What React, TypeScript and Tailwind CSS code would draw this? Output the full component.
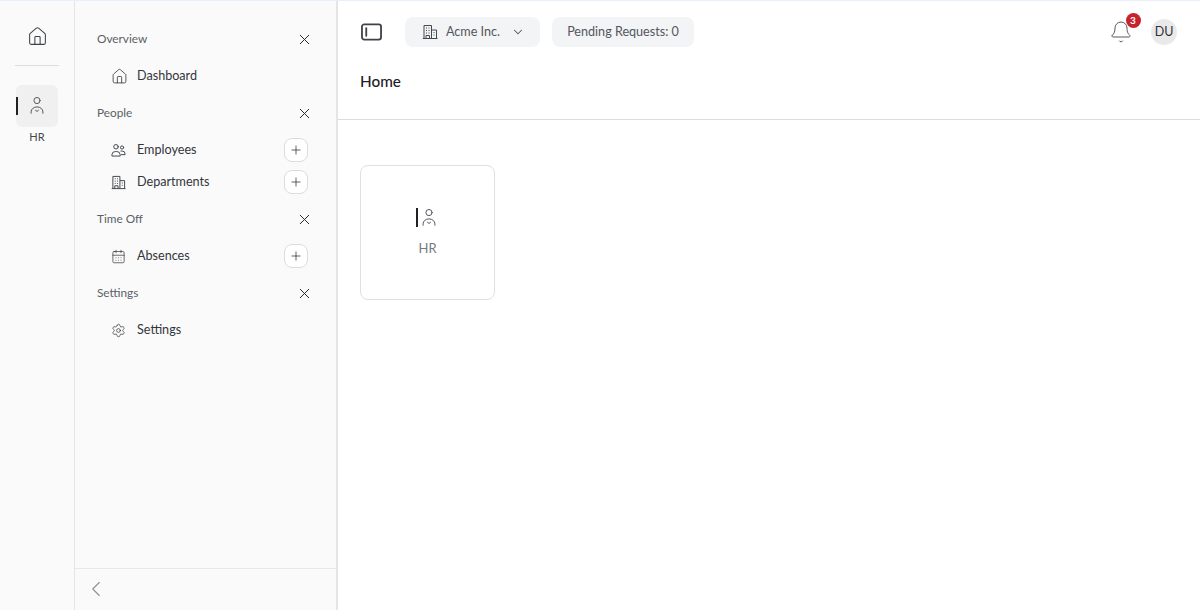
import * as React from "react"
import { Bell, CalendarDays, ChevronDown, ChevronLeft, House, Plus, Settings, X } from "lucide-react"

function PersonIcon({ className }: { className?: string }) {
  return (
    <svg viewBox="0 0 20 22" fill="none" stroke="currentColor" strokeWidth="1.1" strokeLinecap="round" className={className}>
      <circle cx="10" cy="5" r="3.4" />
      <path d="M3.5 19v-1.5a6.5 5.5 0 0 1 13 0V19" />
      <path d="M8.3 15.6 10 17l1.7-1.4" />
    </svg>
  )
}

function PeopleIcon({ className }: { className?: string }) {
  return (
    <svg viewBox="0 0 16 16" fill="none" stroke="currentColor" strokeWidth="1" strokeLinecap="round" strokeLinejoin="round" className={className}>
      <circle cx="5.3" cy="4" r="2.4" />
      <circle cx="11.8" cy="4.8" r="1.7" />
      <path d="M1 13.5v-1a3.6 3.6 0 0 1 3.6-3.4h1.6a3.6 3.6 0 0 1 3.6 3.4v1Z" />
      <path d="M10.6 8.6h1.4a3 3 0 0 1 3 3v.8h-3.8" />
    </svg>
  )
}

function BuildingIcon({ className }: { className?: string }) {
  return (
    <svg viewBox="0 0 16 16" fill="none" stroke="currentColor" strokeWidth="1" strokeLinejoin="round" className={className}>
      <path d="M2 14.500V1.500h7.500v13" />
      <path d="M9.500 6H14.500v8.500" />
      <path d="M.8 14.500h14.700" />
      <path d="M4 14.500v-3h3.500v3" />
      <path d="M4 4h1M6.500 4h1M4 6.500h1M6.500 6.500h1M4 9h1M6.500 9h1M11.500 8.500h1M11.500 11h1" />
    </svg>
  )
}

function PanelIcon({ className }: { className?: string }) {
  return (
    <svg viewBox="0 0 22 18" fill="none" stroke="currentColor" strokeWidth="1.900" strokeLinecap="round" className={className}>
      <rect x="1" y="1" width="20" height="16" rx="2.500" />
      <path d="M5.500 5v8" />
    </svg>
  )
}

function Section({ title, children }: { title: string; children: React.ReactNode }) {
  return (
    <div className="flex flex-col gap-[5px]">
      <div className="flex h-8 items-center justify-between pl-[22px] pr-[23px] text-[11.800px] text-[#5b5f66]">
        <span>{title}</span>
        <X className="size-[17px] text-[#26282c]" strokeWidth={1.4} />
      </div>
      <div className="flex flex-col">{children}</div>
    </div>
  )
}

function NavItem({ icon, label, add }: { icon: React.ReactNode; label: string; add?: boolean }) {
  return (
    <div className="flex h-8 items-center pl-[36px] pr-[28px] text-[12.600px] text-[#33363b]">
      <span className="flex w-[26px] shrink-0 items-center text-[#3c3f44]">{icon}</span>
      <span>{label}</span>
      {add && (
        <span className="ml-auto flex size-6 items-center justify-center rounded-lg border border-[#dcdcdc] bg-white">
          <Plus className="size-[14px] text-[#3a3d42]" strokeWidth={1.4} />
        </span>
      )}
    </div>
  )
}

export default function App() {
  return (
    <div className="flex h-[610px] w-[1200px] flex-col overflow-hidden bg-white font-['Lato',sans-serif]">
      <div className="h-px shrink-0 bg-[#e6effa]" />
      <div className="flex min-h-0 flex-1">
        {/* app rail */}
        <aside className="flex w-[75px] shrink-0 flex-col items-center border-r border-[#e4e4e4] bg-[#fafafa]">
          <div className="flex h-[65px] w-[44px] shrink-0 items-center justify-center border-b border-[#dedede] pt-[6px]">
            <House className="size-[21px] text-[#3f4247]" strokeWidth={1.2} />
          </div>
          <div className="relative mt-[19px] flex size-[42px] items-center justify-center rounded-md bg-[#f0f0f0]">
            <span className="absolute left-0 top-3 h-[18px] w-0.5 bg-[#1f2125]" />
            <PersonIcon className="size-[20px] text-[#55585d]" />
          </div>
          <span className="text-[11px] leading-5 text-[#44474c]">HR</span>
        </aside>

        {/* module menu */}
        <aside className="flex w-[263px] shrink-0 flex-col border-r-2 border-[#e5e5e5] bg-[#fafafa]">
          <nav className="flex flex-1 flex-col gap-[5px] pt-[22px]">
            <Section title="Overview">
              <NavItem icon={<House className="size-[17px]" strokeWidth={1.2} />} label="Dashboard" />
            </Section>
            <Section title="People">
              <NavItem icon={<PeopleIcon className="size-[15px]" />} label="Employees" add />
              <NavItem icon={<BuildingIcon className="size-[15px]" />} label="Departments" add />
            </Section>
            <Section title="Time Off">
              <NavItem icon={<CalendarDays className="size-[15px]" strokeWidth={1.2} />} label="Absences" add />
            </Section>
            <Section title="Settings">
              <NavItem icon={<Settings className="size-[15px]" strokeWidth={1.2} />} label="Settings" />
            </Section>
          </nav>
          <div className="flex h-[42px] shrink-0 items-center border-t border-[#e8e8e8] pb-px pl-[8px]">
            <ChevronLeft className="size-[26px] text-[#8d9096]" strokeWidth={1} />
          </div>
        </aside>

        {/* main */}
        <main className="flex min-w-0 flex-1 flex-col">
          <header className="flex h-[119px] shrink-0 flex-col border-b border-[#dcdcdc] px-[22px]">
            <div className="flex items-center pt-4">
              <PanelIcon className="ml-px h-[18px] w-[21px] text-[#3f4247]" />
              <div className="ml-[23px] flex h-[30px] w-[135px] items-center rounded-lg bg-[#f3f4f6] pl-[17px] text-[12.600px] text-[#53565c]">
                <BuildingIcon className="size-4 text-[#45484d]" />
                <span className="ml-2">Acme Inc.</span>
                <ChevronDown className="ml-[11px] size-[14px]" strokeWidth={1.8} />
              </div>
              <div className="ml-3 flex h-[30px] w-[142px] items-center justify-center rounded-lg bg-[#f3f4f6] text-[12.600px] text-[#53565c]">
                Pending Requests: 0
              </div>
              <div className="relative ml-auto">
                <Bell className="size-6 text-[#55585d]" strokeWidth={1} />
                <span className="absolute -right-[7.500px] -top-[7.500px] flex size-[15px] items-center justify-center rounded-full bg-[#c8232c] text-[10px] font-bold text-white">
                  3
                </span>
              </div>
              <div className="ml-[18px] mr-px flex size-[26px] items-center justify-center rounded-full bg-[#e9e9e9] text-[12.500px] text-[#2f3136]">
                DU
              </div>
            </div>
            <h1 className="mt-[24px] text-[15.300px] font-medium leading-5 text-[#1e2024]">Home</h1>
          </header>
          <section className="p-[22px] pt-[45px]">
            <div className="flex size-[135px] flex-col items-center justify-center rounded-lg border border-[#e0e0e0]">
              <div className="flex h-5 items-center gap-[1px]">
                <span className="h-[19px] w-[2.500px] bg-[#1f2125]" />
                <PersonIcon className="size-[20px] shrink-0 text-[#55585d]" />
              </div>
              <span className="mt-[10px] text-[13px] leading-5 text-[#777a80]">HR</span>
            </div>
          </section>
        </main>
      </div>
    </div>
  )
}
